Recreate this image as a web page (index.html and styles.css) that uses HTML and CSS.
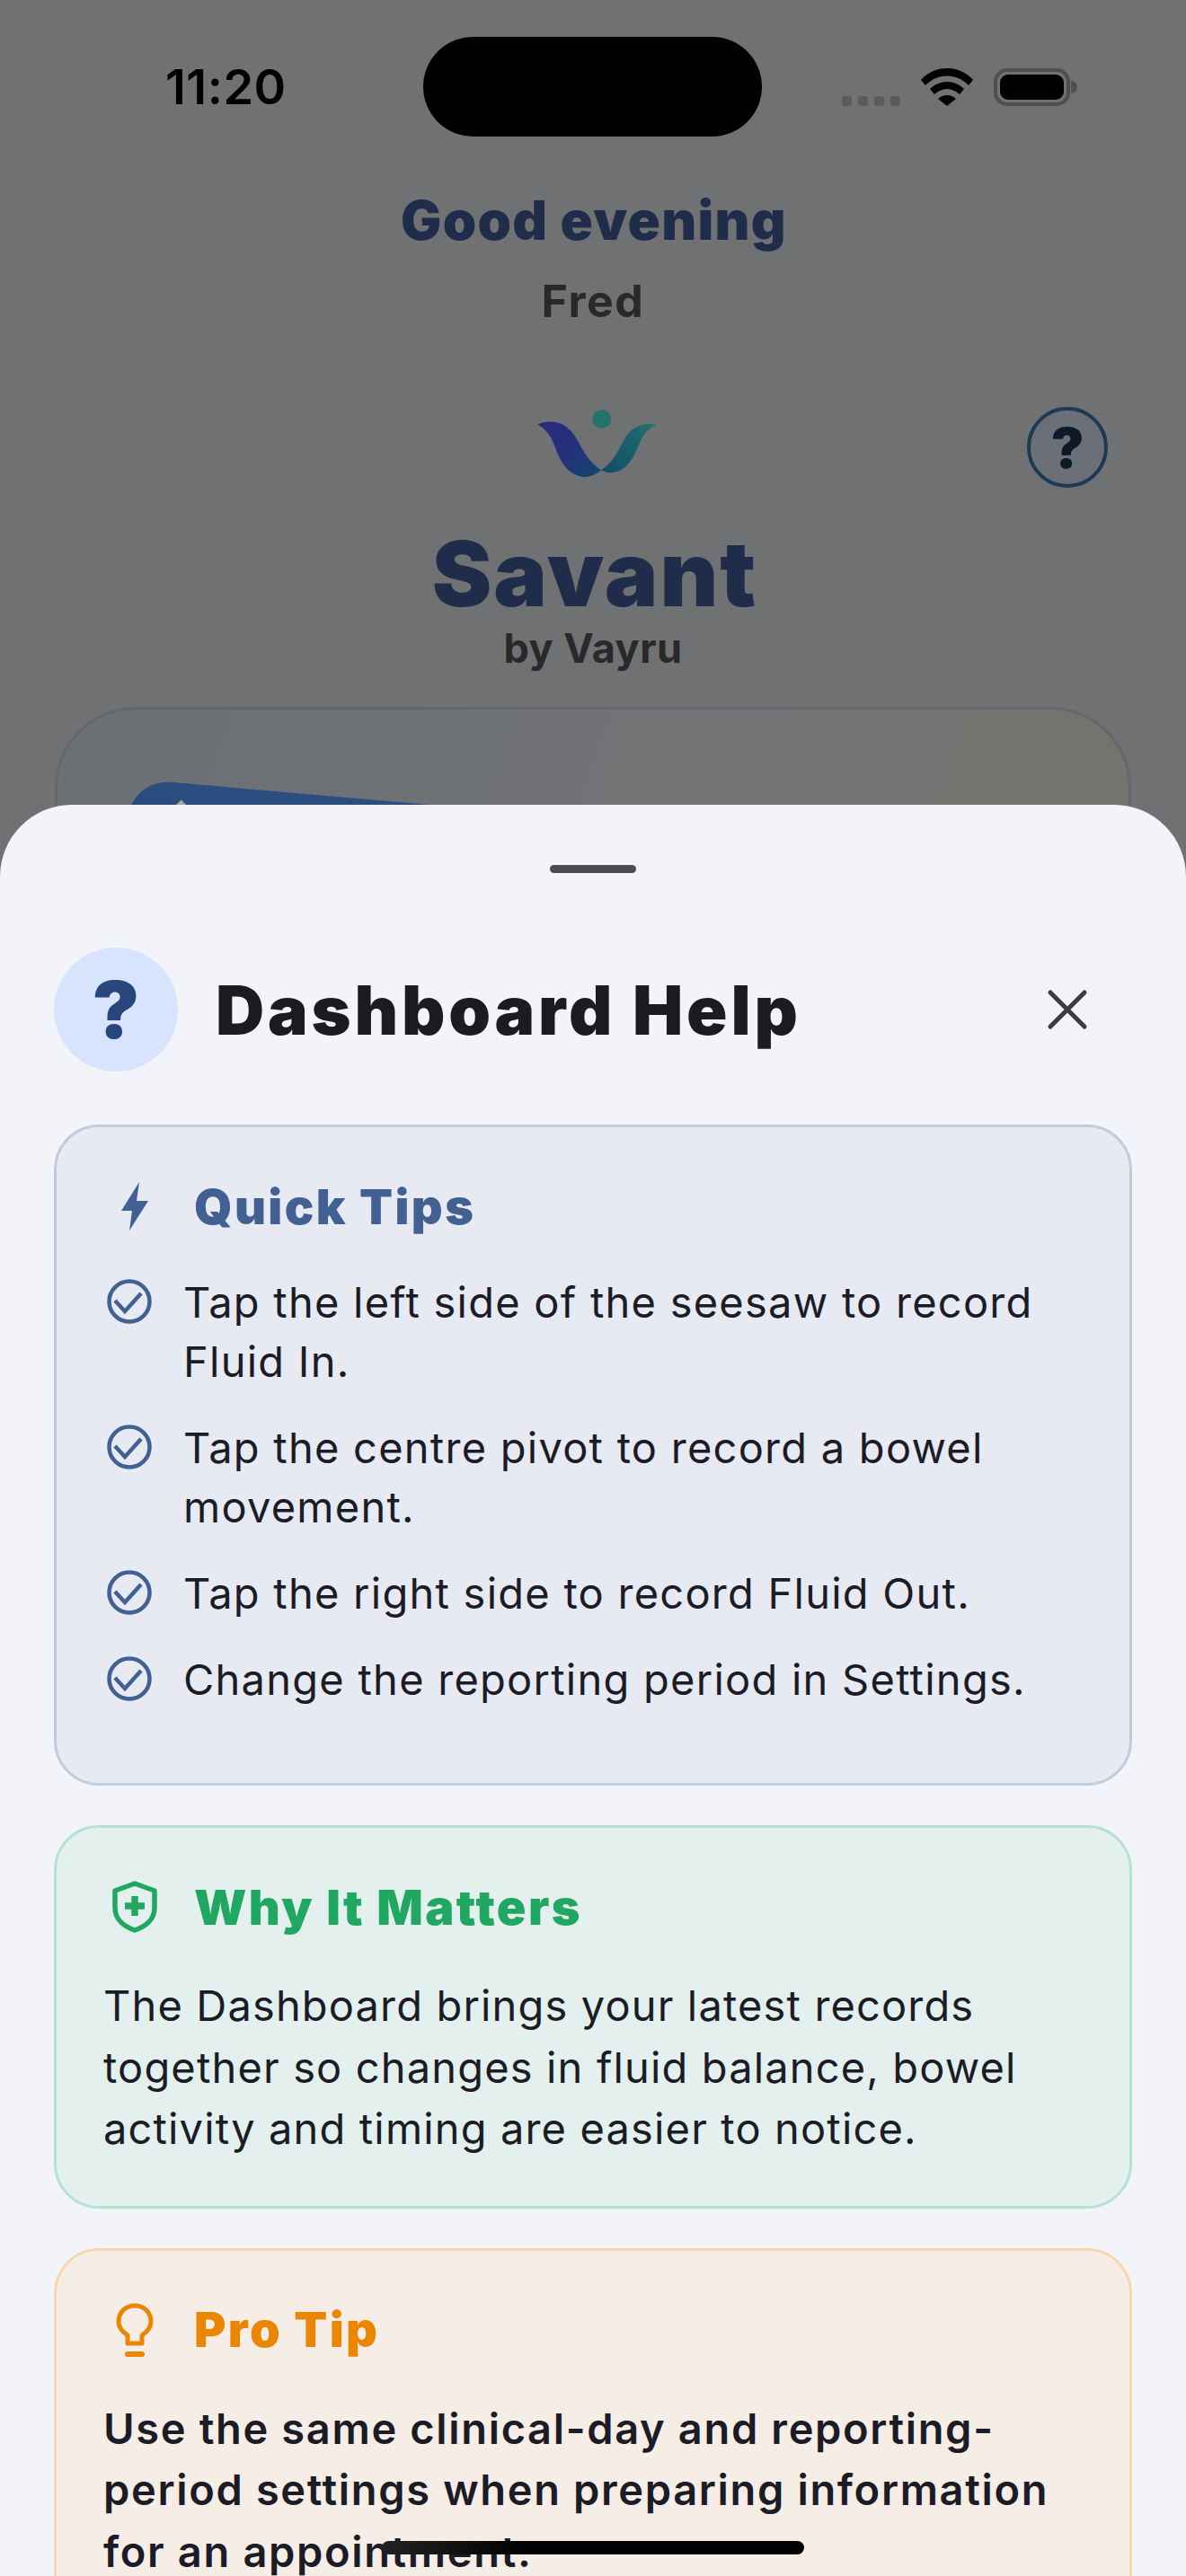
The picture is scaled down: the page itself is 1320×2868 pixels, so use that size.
FILE: index.html
```html
<!DOCTYPE html>
<html lang="en">
<head>
    <meta charset="UTF-8">
    <meta name="viewport" content="width=device-width, initial-scale=1.0">
    <title>Savant Dashboard Help</title>
    <link rel="stylesheet" href="styles.css">
</head>
<body>
    <div class="screen">
        <div class="status-bar">
            <span class="time">11:20</span>
            <div class="island"></div>
            <div class="status-icons">
                <div class="signal"><span></span><span></span><span></span><span></span></div>
                <svg class="wifi" width="58" height="42" viewBox="0 0 58 42">
                    <path fill="#000" d="M29 0C18 0 8 4 0 13l5 6C12 12 20 8.500 29 8.500S46 12 53 19l5-6C50 4 40 0 29 0Z"/>
                    <path fill="#000" d="M29 15c-7 0-14 3-19 8l5 6c4-3.500 9-6 14-6s10 2.500 14 6l5-6c-5-5-12-8-19-8Z"/>
                    <path fill="#000" d="M29 30c-4 0-7 1.500-10 4l10 8 10-8c-3-2.500-6-4-10-4Z"/>
                </svg>
                <div class="battery"><div class="battery-level"></div></div>
                <div class="battery-nub"></div>
            </div>
        </div>

        <h2 class="greeting">Good evening</h2>
        <div class="user-name">Fred</div>

        <div class="brand-row">
            <div></div>
            <svg class="logo" width="240" height="120" viewBox="0 0 720 360">
                <defs>
                    <linearGradient id="swoosh-left" x1="0" y1="0" x2="1" y2="1">
                        <stop offset="0" stop-color="#2b2a7e"/>
                        <stop offset="0.5" stop-color="#23307a"/>
                        <stop offset="1" stop-color="#14466c"/>
                    </linearGradient>
                    <linearGradient id="swoosh-right" x1="0" y1="1" x2="1" y2="0">
                        <stop offset="0" stop-color="#134c6a"/>
                        <stop offset="1" stop-color="#1f716c"/>
                    </linearGradient>
                </defs>
                <circle cx="449" cy="140" r="31" fill="#24736a"/>
                <path fill="url(#swoosh-right)" d="M632 160C590 148 545 165 520 215C500 255 480 290 447 310C465 322 495 322 520 305C550 285 565 245 580 210C590 185 610 168 632 160Z"/>
                <path fill="url(#swoosh-left)" d="M235 158C270 142 320 142 355 190C385 235 395 275 447 310C420 335 390 340 360 325C320 305 305 265 290 225C280 195 260 170 235 158Z"/>
            </svg>
            <div class="help-cell">
                <div class="help-btn">?</div>
            </div>
        </div>

        <h1 class="app-name">Savant</h1>
        <div class="app-by">by Vayru</div>

        <div class="balance-card">
            <div class="balance-beam"><span class="beam-mark"></span></div>
        </div>
    </div>

    <div class="sheet">
        <div class="grabber"></div>
        <div class="sheet-header">
            <div class="sheet-icon">?</div>
            <div class="sheet-title">Dashboard Help</div>
            <svg class="sheet-close" width="48" height="48" viewBox="0 0 48 48">
                <path d="M5 5L43 43M43 5L5 43" stroke="#3a3c42" stroke-width="5" stroke-linecap="round"/>
            </svg>
        </div>

        <div class="help-card tips">
            <div class="card-title">
                <div class="card-icon">
                    <svg width="32" height="54" viewBox="0 0 32 54">
                        <path fill="#436093" d="M21 0L1 32H13L10 54L31 21H18Z"/>
                    </svg>
                </div>
                <span>Quick Tips</span>
            </div>
            <ul class="tips-list">
                <li>
                    <svg width="58" height="50" viewBox="0 0 58 50">
                        <circle cx="29" cy="25" r="22.500" fill="none" stroke="#436093" stroke-width="4.500"/>
                        <path d="M13 24L24 36L42 16" fill="none" stroke="#436093" stroke-width="4.500"/>
                    </svg>
                    <span>Tap the left side of the seesaw to record Fluid In.</span>
                </li>
                <li>
                    <svg width="58" height="50" viewBox="0 0 58 50">
                        <circle cx="29" cy="25" r="22.500" fill="none" stroke="#436093" stroke-width="4.500"/>
                        <path d="M13 24L24 36L42 16" fill="none" stroke="#436093" stroke-width="4.500"/>
                    </svg>
                    <span>Tap the centre pivot to record a bowel movement.</span>
                </li>
                <li>
                    <svg width="58" height="50" viewBox="0 0 58 50">
                        <circle cx="29" cy="25" r="22.500" fill="none" stroke="#436093" stroke-width="4.500"/>
                        <path d="M13 24L24 36L42 16" fill="none" stroke="#436093" stroke-width="4.500"/>
                    </svg>
                    <span>Tap the right side to record Fluid Out.</span>
                </li>
                <li>
                    <svg width="58" height="50" viewBox="0 0 58 50">
                        <circle cx="29" cy="25" r="22.500" fill="none" stroke="#436093" stroke-width="4.500"/>
                        <path d="M13 24L24 36L42 16" fill="none" stroke="#436093" stroke-width="4.500"/>
                    </svg>
                    <span>Change the reporting period in Settings.</span>
                </li>
            </ul>
        </div>

        <div class="help-card why">
            <div class="card-title">
                <div class="card-icon">
                    <svg width="50" height="58" viewBox="0 0 50 58">
                        <path d="M25 3L47 11V30C47 43 37 51 25 55C13 51 3 43 3 30V11Z" fill="none" stroke="#20a862" stroke-width="5.500" stroke-linejoin="round"/>
                        <path d="M25 17V39M14 28H36" stroke="#20a862" stroke-width="7.500"/>
                    </svg>
                </div>
                <span>Why It Matters</span>
            </div>
            <p class="card-text">The Dashboard brings your latest records together so changes in fluid balance, bowel activity and timing are easier to notice.</p>
        </div>

        <div class="help-card pro">
            <div class="card-title">
                <div class="card-icon">
                    <svg width="42" height="60" viewBox="0 0 42 60">
                        <path d="M13 45V36C7 32 3 27 3 21C3 10 11 3 21 3S39 10 39 21C39 27 35 32 29 36V45Z" fill="none" stroke="#ea8600" stroke-width="5" stroke-linejoin="round"/>
                        <path d="M13 57H29" stroke="#ea8600" stroke-width="6" stroke-linecap="round"/>
                    </svg>
                </div>
                <span>Pro Tip</span>
            </div>
            <p class="card-text strong">Use the same clinical-day and reporting-period settings when preparing information for an appointment.</p>
        </div>
    </div>

    <div class="home-indicator"></div>
</body>
</html>
```

FILE: styles.css
```css
* {
    box-sizing: border-box;
}

html,
body {
    margin: 0;
    padding: 0;
}

body {
    position: relative;
    width: 1320px;
    height: 2868px;
    overflow: hidden;
    font-family: Inter, "Liberation Sans", sans-serif;
    background-color: #707173;
}

/* Dimmed dashboard behind the sheet */
.screen {
    display: flex;
    flex-direction: column;
    align-items: center;
}

.status-bar {
    display: flex;
    align-items: center;
    width: 100%;
    height: 111px;
    margin-top: 41px;
    padding-left: 184px;
}

.time {
    width: 287px;
    font-size: 54px;
    font-weight: 600;
    letter-spacing: 0.500px;
    color: #000;
}

.island {
    width: 377px;
    height: 111px;
    border-radius: 56px;
    background-color: #000;
}

.status-icons {
    display: flex;
    align-items: flex-end;
    height: 42px;
    margin-left: 89px;
}

.signal {
    display: flex;
    gap: 7px;
    margin-right: 23px;
}

.signal span {
    width: 11px;
    height: 11px;
    border-radius: 3px;
    background-color: #5a5b5d;
}

.battery {
    width: 85px;
    height: 42px;
    margin-left: 23px;
    padding: 3px;
    border: 4px solid #4f4f51;
    border-radius: 15px;
}

.battery-level {
    width: 100%;
    height: 100%;
    border-radius: 9px;
    background-color: #000;
}

.battery-nub {
    width: 7px;
    height: 14px;
    margin: 0 0 14px 1px;
    border-radius: 0 7px 7px 0;
    background-color: #4f4f51;
}

.greeting {
    margin: 58px 0 0;
    padding-left: 2px;
    font-size: 60px;
    line-height: 70px;
    font-weight: 900;
    letter-spacing: 1.300px;
    color: #1f2c4a;
}

.user-name {
    margin-top: 25px;
    font-size: 50px;
    line-height: 60px;
    font-weight: 700;
    letter-spacing: 1.500px;
    color: #29292b;
}

.brand-row {
    display: grid;
    grid-template-columns: 520px 240px 1fr;
    grid-template-rows: 120px;
    width: 100%;
    margin-top: 55px;
}

.help-cell {
    padding: 33px 0 0 383px;
}

.help-btn {
    display: flex;
    align-items: center;
    justify-content: center;
    width: 90px;
    height: 90px;
    border: 4px solid #1f3a55;
    border-radius: 50%;
    background-color: #6b7078;
    font-size: 62px;
    font-weight: 900;
    color: #0d1a2a;
}

.app-name {
    margin: 44px 0 0;
    padding-left: 4px;
    font-size: 100px;
    line-height: 110px;
    font-weight: 900;
    letter-spacing: 2px;
    color: #1f2c4a;
}

.app-by {
    margin-top: 3px;
    font-size: 45px;
    line-height: 50px;
    font-weight: 700;
    letter-spacing: 0.500px;
    color: #29292b;
}

.balance-card {
    width: 1198px;
    height: 500px;
    margin-top: 40px;
    padding: 77px 0 0 82px;
    border: 3px solid #66676a;
    border-radius: 90px;
    background: linear-gradient(110deg, #6b7074 0%, #727375 55%, #76736b 100%);
}

.balance-beam {
    width: 1000px;
    height: 200px;
    padding: 24px 0 0 46px;
    border-radius: 44px;
    background: linear-gradient(180deg, #2c4e7f 0%, #1b3c72 100%);
    transform: rotate(5deg);
    transform-origin: top left;
}

.beam-mark {
    display: block;
    width: 26px;
    height: 26px;
    border: 5px solid #a3a6ab;
    transform: rotate(40deg);
}

/* Help sheet */
.sheet {
    position: absolute;
    top: 896px;
    left: 0;
    right: 0;
    bottom: 0;
    overflow: hidden;
    padding: 67px 60px 0;
    border-radius: 80px 80px 0 0;
    background-color: #f3f4fa;
}

.grabber {
    width: 96px;
    height: 9px;
    margin: 0 auto;
    border-radius: 5px;
    background-color: #4a4c52;
}

.sheet-header {
    display: flex;
    align-items: center;
    margin-top: 83px;
}

.sheet-icon {
    display: flex;
    align-items: center;
    justify-content: center;
    width: 138px;
    height: 138px;
    border-radius: 50%;
    background-color: #d8e3fd;
    font-size: 88px;
    font-weight: 900;
    color: #28467c;
}

.sheet-title {
    flex: 1;
    margin-left: 42px;
    font-size: 75px;
    font-weight: 900;
    letter-spacing: 3.800px;
    color: #1b1c20;
}

.sheet-close {
    margin-right: 48px;
}

.help-card {
    margin-top: 44px;
    padding: 58px 52px 51px;
    border: 3px solid;
    border-radius: 50px;
}

.sheet-header + .help-card {
    margin-top: 59px;
}

.tips {
    padding-bottom: 82px;
    border-color: #c0cbe0;
    background-color: #e7e9f3;
    color: #436093;
}

.why {
    border-color: #b5e2cf;
    background-color: #e4f0ed;
    color: #20a862;
}

.pro {
    border-color: #f5d7b0;
    background-color: #f6eee6;
    color: #ea8600;
}

.card-title {
    display: flex;
    align-items: center;
    height: 60px;
    font-size: 54px;
    font-weight: 900;
    letter-spacing: 2.400px;
}

.card-icon {
    display: flex;
    justify-content: center;
    width: 70px;
    margin-right: 31px;
}

.tips-list {
    display: flex;
    flex-direction: column;
    gap: 30px;
    margin: 44px 0 0;
    padding: 0;
    list-style: none;
}

.tips-list li {
    display: flex;
    align-items: flex-start;
    gap: 31px;
    font-size: 47px;
    line-height: 66px;
    letter-spacing: 1.250px;
    color: #1b1c26;
}

.tips-list svg {
    flex: none;
    margin-top: 7px;
}

.card-text {
    margin: 46px 0 0;
    font-size: 47px;
    line-height: 68.500px;
    letter-spacing: 1.150px;
    color: #1b1c26;
}

.card-text.strong {
    font-weight: 600;
    letter-spacing: 1.650px;
}

.home-indicator {
    position: absolute;
    left: 425px;
    top: 2829px;
    width: 470px;
    height: 15px;
    border-radius: 8px;
    background: linear-gradient(90deg, #222 0%, #000 35%);
}
```
